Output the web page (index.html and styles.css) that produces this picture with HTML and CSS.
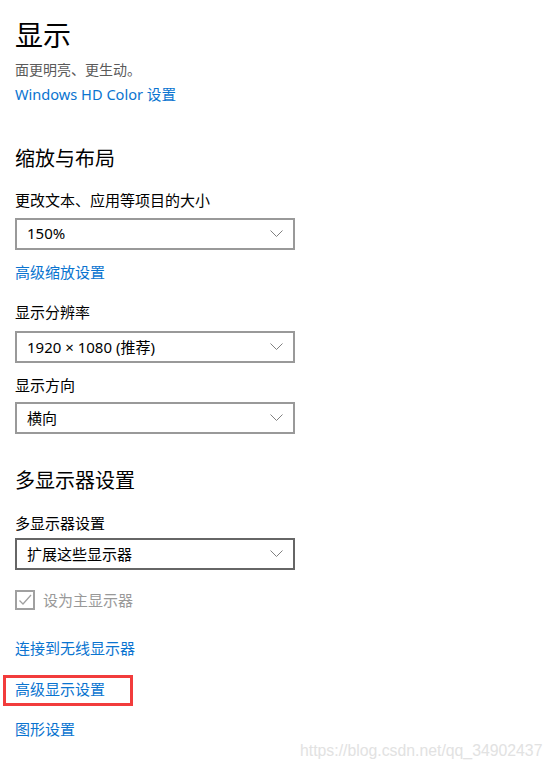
FILE: index.html
```html
<!DOCTYPE html>
<html lang="zh-CN">
<head>
<meta charset="utf-8">
<title>显示</title>
<link rel="stylesheet" href="styles.css">
</head>
<body>
<main class="page">
  <h1 class="title">显示</h1>
  <p class="subtitle">面更明亮、更生动。</p>
  <a class="link link-hd">Windows HD Color 设置</a>

  <h2 class="heading heading-first">缩放与布局</h2>
  <div class="label label-first">更改文本、应用等项目的大小</div>
  <div class="select select-a"><span>150%</span><svg class="chev" width="13" height="8" viewBox="0 0 13 8"><polyline points="0.5,0.5 6.5,6.5 12.5,0.5" fill="none" stroke="#808080" stroke-width="1"/></svg></div>
  <a class="link link-after-select">高级缩放设置</a>

  <div class="label label-res">显示分辨率</div>
  <div class="select select-b"><span>1920 × 1080 (推荐)</span><svg class="chev" width="13" height="8" viewBox="0 0 13 8"><polyline points="0.5,0.5 6.5,6.5 12.5,0.5" fill="none" stroke="#808080" stroke-width="1"/></svg></div>
  <div class="label label-dir">显示方向</div>
  <div class="select select-c"><span>横向</span><svg class="chev" width="13" height="8" viewBox="0 0 13 8"><polyline points="0.5,0.5 6.5,6.5 12.5,0.5" fill="none" stroke="#808080" stroke-width="1"/></svg></div>

  <h2 class="heading heading-multi">多显示器设置</h2>
  <div class="label label-multi">多显示器设置</div>
  <div class="select select-d select-dark"><span>扩展这些显示器</span><svg class="chev" width="13" height="8" viewBox="0 0 13 8"><polyline points="0.5,0.5 6.5,6.5 12.5,0.5" fill="none" stroke="#808080" stroke-width="1"/></svg></div>

  <div class="check-row">
    <span class="checkbox"><svg width="16" height="16" viewBox="0 0 16 16"><polyline points="2.5,8.5 6,12 14,3" fill="none" stroke="#a0a0a0" stroke-width="1.3"/></svg></span>
    <span class="check-text">设为主显示器</span>
  </div>

  <a class="link link-wireless">连接到无线显示器</a>
  <div class="highlight"><a class="link">高级显示设置</a></div>
  <a class="link link-graphics">图形设置</a>
</main>
<div class="watermark">https://blog.csdn.net/qq_34902437</div>
</body>
</html>
```

FILE: styles.css
```css
* { box-sizing: border-box; }
html, body { margin: 0; padding: 0; background: #fff; }
body {
  width: 553px;
  height: 771px;
  overflow: hidden;
  position: relative;
  font-family: "Segoe UI", "Noto Sans", "Noto Sans CJK SC", sans-serif;
  color: #000;
}
.page {
  display: flex;
  flex-direction: column;
  align-items: flex-start;
  padding: 19px 0 0 15px;
}
.title {
  margin: 0;
  font-family: "Noto Sans CJK SC", sans-serif;
  font-weight: 400;
  font-size: 28px;
  line-height: 30px;
  height: 30px;
}
.subtitle {
  margin: 10px 0 0;
  font-family: "Noto Sans CJK SC", sans-serif;
  font-size: 14px;
  line-height: 20px;
  height: 20px;
  color: #5a5a5a;
}
.link {
  display: block;
  font-family: "Noto Sans", "Noto Sans CJK SC", sans-serif;
  font-size: 15px;
  line-height: 20px;
  height: 20px;
  color: #0a74d0;
  text-decoration: none;
}
.link-hd { margin-top: 5px; font-size: 14.6px; }
.heading {
  margin: 0;
  font-family: "Noto Sans CJK SC", sans-serif;
  font-weight: 400;
  font-size: 20px;
  line-height: 24px;
  height: 24px;
}
.heading-first { margin-top: 42px; }
.heading-multi { margin-top: 34px; }
.label {
  font-family: "Noto Sans CJK SC", sans-serif;
  font-size: 15px;
  line-height: 20px;
  height: 20px;
}
.label-first { margin-top: 20px; }
.label-res { margin-top: 20px; }
.label-dir { margin-top: 12px; }
.label-multi { margin-top: 21px; }
.select {
  width: 280px;
  height: 32px;
  border: 2px solid #999;
  display: flex;
  align-items: center;
  justify-content: space-between;
  padding: 0 10px 2px 10px;
  font-family: "Noto Sans", "Noto Sans CJK SC", sans-serif;
  font-size: 15px;
  color: #000;
}
.select .chev { margin-top: 2px; }
.select-dark { border-color: #666; }
.select-a { margin-top: 8px; }
.select-b { margin-top: 9px; }
.select-c { margin-top: 7px; }
.select-d { margin-top: 5px; }
.chev { display: block; }
.link-after-select { margin-top: 12px; }
.check-row {
  margin-top: 20px;
  display: flex;
  align-items: center;
  gap: 8px;
  height: 20px;
}
.checkbox {
  width: 20px;
  height: 20px;
  border: 2px solid #a0a0a0;
  display: flex;
  align-items: center;
  justify-content: center;
}
.checkbox svg { display: block; }
.check-text {
  font-family: "Noto Sans CJK SC", sans-serif;
  font-size: 15px;
  line-height: 20px;
  color: #999;
}
.link-wireless { margin-top: 28px; }
.highlight {
  margin: 17px 0 0 -12px;
  border: 3px solid #f23c3c;
  width: 130px;
  height: 31px;
  padding: 1px 0 0 9px;
}
.link-graphics { margin-top: 13px; }
.watermark {
  position: absolute;
  left: 300px;
  top: 742px;
  font-family: "Liberation Sans", Arial, sans-serif;
  font-size: 15.8px;
  line-height: 18px;
  color: #e2e2e2;
  white-space: nowrap;
}
```
